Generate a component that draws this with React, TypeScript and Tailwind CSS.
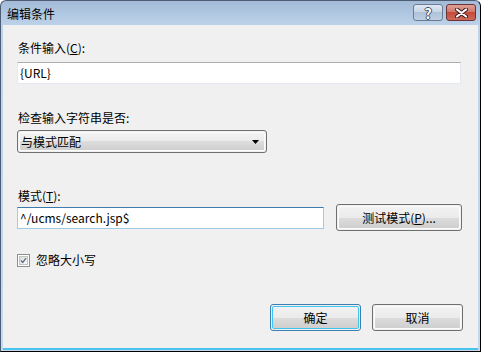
import React from 'react';

const font = { fontFamily: '"Noto Sans CJK SC", "Microsoft YaHei", "Noto Sans", sans-serif' };

function Win7Button({
  children,
  width,
  height = 'h-[27px]',
  isDefault = false,
}: {
  children: React.ReactNode;
  width: string;
  height?: string;
  isDefault?: boolean;
}) {
  return (
    <div
      className={`${width} ${height} rounded-[3px] border ${
        isDefault ? 'border-[#3c7fb1]' : 'border-[#707070]'
      } p-px`}
    >
      <div
        className={`h-full w-full rounded-[2px] ${
          isDefault ? 'border border-[#40c4f0]' : 'border border-[#fcfcfc]'
        } bg-[linear-gradient(#f2f2f2_0%,#ebebeb_50%,#dddddd_50%,#cfcfcf_100%)] flex items-center justify-center text-[12px] text-black`}
      >
        {children}
      </div>
    </div>
  );
}

function TextBox({ value, width, focused = false }: { value: string; width: string; focused?: boolean }) {
  return (
    <div
      className={`${width} h-[22px] border bg-white flex items-center pl-[2px] text-[12px] text-black ${
        focused
          ? 'border-[#a4c9e3] border-t-[#3d7bad]'
          : 'border-[#e3e9ef] border-t-[#abadb3]'
      }`}
    >
      {value}
    </div>
  );
}

export default function App() {
  return (
    <div
      className="w-[481px] h-[352px] flex flex-col bg-[linear-gradient(#a3bbd7_0px,#bcd3ea_25px,#c4d9ee_100%)] border border-[#4c5d73] border-r-black border-b-black rounded-t-[6px] overflow-hidden"
      style={font}
    >
      {/* title bar */}
      <div className="h-[24px] flex items-start shrink-0">
        <div className="pl-[6px] pt-[4px] text-[12px] leading-[17px] text-black">编辑条件</div>
        <div className="ml-auto flex gap-[3px] pt-[3px] pr-[4px]">
          <div className="w-[30px] h-[17px] rounded-[3px] border border-[#6d7c92] bg-[linear-gradient(#e0e8f2_0%,#c5d3e4_50%,#b0c2d8_50%,#bfd0e4_100%)] flex items-center justify-center">
            <span
              className="text-[14px] font-bold leading-none text-white"
              style={{
                textShadow:
                  '1px 0 0 #3c4f6b, -1px 0 0 #3c4f6b, 0 1px 0 #3c4f6b, 0 -1px 0 #3c4f6b',
              }}
            >
              ?
            </span>
          </div>
          <div className="w-[30px] h-[17px] rounded-[3px] border border-[#6b3434] bg-[linear-gradient(#e0a197_0%,#cf7366_50%,#c44c3c_50%,#d0695a_100%)] flex items-center justify-center">
            <svg width="13" height="10" viewBox="0 0 13 10">
              <path d="M2 1.5 L11 8.5 M11 1.5 L2 8.5" stroke="#3a1a1a" strokeWidth="4" strokeLinecap="round" />
              <path d="M2 1.5 L11 8.5 M11 1.5 L2 8.5" stroke="#ffffff" strokeWidth="2.2" strokeLinecap="round" />
            </svg>
          </div>
        </div>
      </div>

      {/* client area */}
      <div className="flex-1 mx-[2px] mb-[1px] bg-[#f0f0f0] border-b-2 border-[#48c4ec] flex flex-col pl-[14px] pr-[15px] text-[12px] text-black">
        <div className="mt-[15px] h-[16px] leading-[16px] pl-[1px]">
          条件输入(<u>C</u>):
        </div>
        <div className="mt-[6px]">
          <TextBox value="{URL}" width="w-[444px]" />
        </div>

        <div className="mt-[26px] h-[16px] leading-[16px] pl-[1px]">检查输入字符串是否:</div>
        <div className="mt-[4px] w-[250px] h-[23px] rounded-[3px] border border-[#707070] p-px">
          <div className="h-full w-full rounded-[2px] border border-[#fcfcfc] bg-[linear-gradient(#f2f2f2_0%,#ebebeb_50%,#dddddd_50%,#cfcfcf_100%)] flex items-center pl-[1px] pr-[5px]">
            <span>与模式匹配</span>
            <svg className="ml-auto" width="7" height="4" viewBox="0 0 7 4">
              <path d="M0 0 H7 L3.5 4 Z" fill="#000" />
            </svg>
          </div>
        </div>

        <div className="mt-[35px] h-[16px] leading-[16px] pl-[1px]">
          模式(<u>T</u>):
        </div>
        <div className="h-[27px] flex items-center gap-[12px]">
          <TextBox value="^/ucms/search.jsp$" width="w-[307px]" focused />
          <Win7Button width="w-[126px]">
            测试模式(<u>P</u>)...
          </Win7Button>
        </div>

        <div className="mt-[21px] h-[16px] flex items-center gap-[6px]">
          <div className="w-[13px] h-[13px] border border-[#8e8f8f] bg-white p-px">
            <div className="w-full h-full border border-[#c3c3c3] bg-[linear-gradient(135deg,#dcdcdc,#fbfbfb)] flex items-center justify-center">
              <svg width="9" height="9" viewBox="0 0 9 9">
                <path d="M1.2 4.6 L3.5 7 L7.8 1.5" stroke="#5d6c86" strokeWidth="1.7" fill="none" />
              </svg>
            </div>
          </div>
          <span className="leading-[16px]">忽略大小写</span>
        </div>

        <div className="mt-[36px] flex justify-end gap-[11px]">
          <Win7Button width="w-[91px]" isDefault>
            确定
          </Win7Button>
          <Win7Button width="w-[91px]">取消</Win7Button>
        </div>
      </div>
    </div>
  );
}
